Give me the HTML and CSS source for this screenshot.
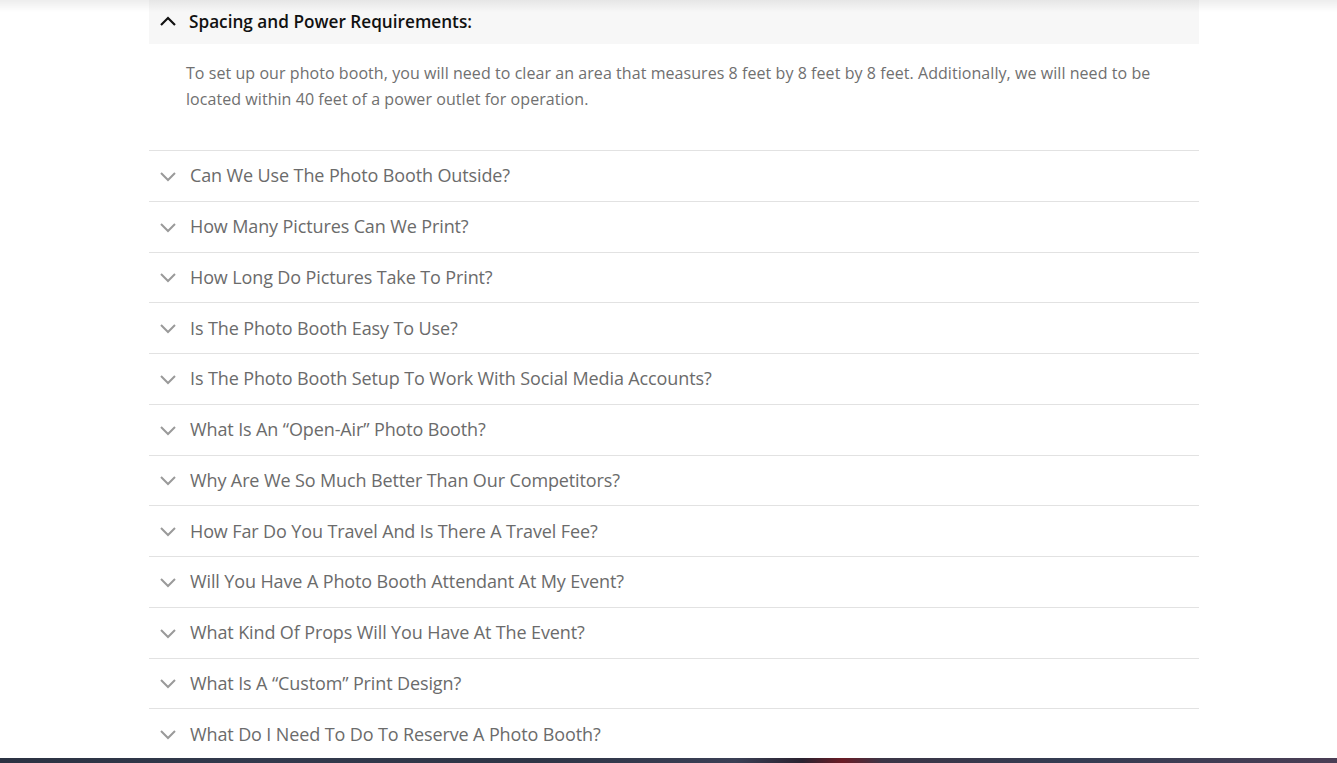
FILE: index.html
```html
<!DOCTYPE html>
<html lang="en">
<head>
<meta charset="utf-8">
<title>FAQ</title>
<link rel="stylesheet" href="styles.css">
</head>
<body>
<div class="topshade"></div>
<main class="page">
  <section class="faq">
    <div class="item active">
      <div class="head">
        <svg class="chev up" viewBox="0 0 18 12" width="18" height="12"><path d="M2 10 L9 3 L16 10" fill="none" stroke="#111" stroke-width="2.2"/></svg>
        <span class="title">Spacing and Power Requirements:</span>
      </div>
      <div class="body">
        <p>To set up our photo booth, you will need to clear an area that measures 8 feet by 8 feet by 8 feet. Additionally, we will need to be located within 40 feet of a power outlet for operation.</p>
      </div>
    </div>
    <div class="item"><div class="q"><svg class="chev" viewBox="0 0 18 12" width="18" height="12"><path d="M2 3 L9 10 L16 3" fill="none" stroke="#9a9a9a" stroke-width="2"/></svg><span>Can We Use The Photo Booth Outside?</span></div></div>
    <div class="item"><div class="q"><svg class="chev" viewBox="0 0 18 12" width="18" height="12"><path d="M2 3 L9 10 L16 3" fill="none" stroke="#9a9a9a" stroke-width="2"/></svg><span>How Many Pictures Can We Print?</span></div></div>
    <div class="item"><div class="q"><svg class="chev" viewBox="0 0 18 12" width="18" height="12"><path d="M2 3 L9 10 L16 3" fill="none" stroke="#9a9a9a" stroke-width="2"/></svg><span>How Long Do Pictures Take To Print?</span></div></div>
    <div class="item"><div class="q"><svg class="chev" viewBox="0 0 18 12" width="18" height="12"><path d="M2 3 L9 10 L16 3" fill="none" stroke="#9a9a9a" stroke-width="2"/></svg><span>Is The Photo Booth Easy To Use?</span></div></div>
    <div class="item"><div class="q"><svg class="chev" viewBox="0 0 18 12" width="18" height="12"><path d="M2 3 L9 10 L16 3" fill="none" stroke="#9a9a9a" stroke-width="2"/></svg><span>Is The Photo Booth Setup To Work With Social Media Accounts?</span></div></div>
    <div class="item"><div class="q"><svg class="chev" viewBox="0 0 18 12" width="18" height="12"><path d="M2 3 L9 10 L16 3" fill="none" stroke="#9a9a9a" stroke-width="2"/></svg><span>What Is An “Open-Air” Photo Booth?</span></div></div>
    <div class="item"><div class="q"><svg class="chev" viewBox="0 0 18 12" width="18" height="12"><path d="M2 3 L9 10 L16 3" fill="none" stroke="#9a9a9a" stroke-width="2"/></svg><span>Why Are We So Much Better Than Our Competitors?</span></div></div>
    <div class="item"><div class="q"><svg class="chev" viewBox="0 0 18 12" width="18" height="12"><path d="M2 3 L9 10 L16 3" fill="none" stroke="#9a9a9a" stroke-width="2"/></svg><span>How Far Do You Travel And Is There A Travel Fee?</span></div></div>
    <div class="item"><div class="q"><svg class="chev" viewBox="0 0 18 12" width="18" height="12"><path d="M2 3 L9 10 L16 3" fill="none" stroke="#9a9a9a" stroke-width="2"/></svg><span>Will You Have A Photo Booth Attendant At My Event?</span></div></div>
    <div class="item"><div class="q"><svg class="chev" viewBox="0 0 18 12" width="18" height="12"><path d="M2 3 L9 10 L16 3" fill="none" stroke="#9a9a9a" stroke-width="2"/></svg><span>What Kind Of Props Will You Have At The Event?</span></div></div>
    <div class="item"><div class="q"><svg class="chev" viewBox="0 0 18 12" width="18" height="12"><path d="M2 3 L9 10 L16 3" fill="none" stroke="#9a9a9a" stroke-width="2"/></svg><span>What Is A “Custom” Print Design?</span></div></div>
    <div class="item"><div class="q"><svg class="chev" viewBox="0 0 18 12" width="18" height="12"><path d="M2 3 L9 10 L16 3" fill="none" stroke="#9a9a9a" stroke-width="2"/></svg><span>What Do I Need To Do To Reserve A Photo Booth?</span></div></div>
  </section>
  <div class="strip"></div>
</main>
</body>
</html>
```

FILE: styles.css
```css
html, body {
  margin: 0;
  padding: 0;
  background: #ffffff;
}
body {
  font-family: "Open Sans", "Liberation Sans", sans-serif;
  position: relative;
  height: 763px;
  overflow: hidden;
}
.topshade {
  position: absolute;
  left: 0;
  top: 0;
  right: 0;
  height: 12px;
  background: linear-gradient(to bottom, rgba(0,0,0,0.07), rgba(0,0,0,0));
  pointer-events: none;
  z-index: 2;
}
.page {
  display: flex;
  flex-direction: column;
}
.faq {
  width: 1050px;
  margin-left: 149px;
  display: flex;
  flex-direction: column;
}
.head {
  height: 44px;
  background: #f7f7f7;
  display: flex;
  align-items: center;
  padding-left: 10px;
  padding-bottom: 2px;
  box-sizing: border-box;
  gap: 12px;
}
.head .title {
  font-size: 17.2px;
  font-weight: 600;
  color: #111111;
}
.chev {
  display: block;
  flex: none;
}
.body {
  padding: 16px 37px 38px 37px;
}
.body p {
  margin: 0;
  font-size: 16px;
  line-height: 26px;
  letter-spacing: 0.06px;
  color: #707070;
}
.item + .item {
  border-top: 1px solid #e2e2e2;
}
.q {
  height: 49.75px;
  box-sizing: border-box;
  padding-bottom: 1px;
  display: flex;
  align-items: center;
  padding-left: 10px;
  gap: 13px;
  font-size: 18px;
  letter-spacing: -0.12px;
  color: #6b6b6b;
}
.q .chev {
  margin-top: 1px;
}
.strip {
  height: 6px;
  margin-top: -1px;
  background: linear-gradient(to right, #2b3242 0%, #323a4d 20%, #2e3546 40%, #3a3f55 55%, #2a2230 60%, #6a1b25 63%, #3b3546 66%, #343c52 80%, #4a3e55 100%);
}
```
